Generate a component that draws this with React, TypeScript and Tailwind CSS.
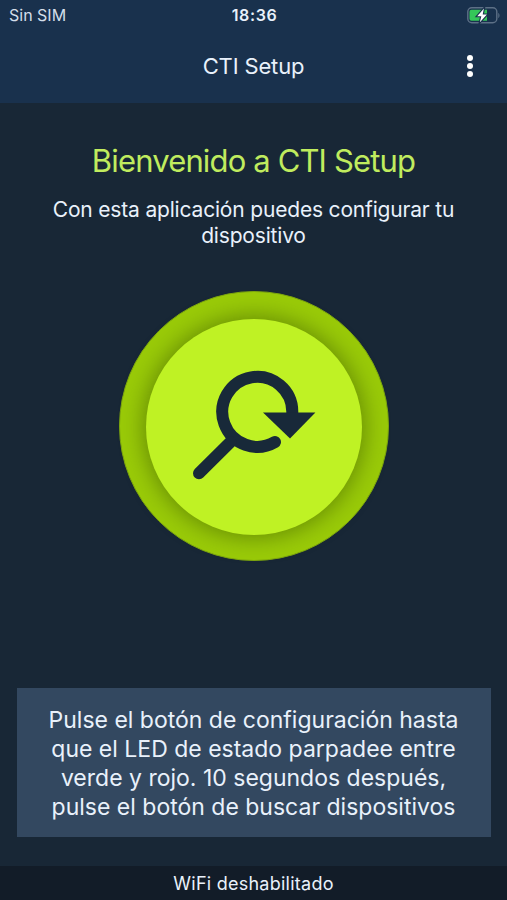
import React from "react";

const introLines = ["Con esta aplicación puedes configurar tu", "dispositivo"];

const helpLines = [
  "Pulse el botón de configuración hasta",
  "que el LED de estado parpadee entre",
  "verde y rojo. 10 segundos después,",
  "pulse el botón de buscar dispositivos",
];

function BatteryIcon() {
  return (
    <svg width="33" height="17" viewBox="0 0 33 17" fill="none">
      <rect x="0.8" y="0.8" width="29" height="15" rx="4" stroke="#5d7086" strokeWidth="1.4" />
      <path d="M31.3 6v5c1.6-.5 1.6-4.5 0-5Z" fill="#5d7086" />
      <path d="M4.5 2.8h15.5v11h-15.5a2 2 0 0 1-2-2v-7a2 2 0 0 1 2-2Z" fill="#35c759" />
      <path
        d="M16.9 1.6 10.2 9.2h4.1l-1.4 6 7-7.7h-4.2Z"
        fill="#fff"
        stroke="#19314d"
        strokeWidth="2.2"
        paintOrder="stroke"
      />
    </svg>
  );
}

function SearchDevicesIcon() {
  return (
    <svg width="216" height="216" viewBox="0 0 216 216" fill="none">
      <g stroke="#182939" strokeWidth="12" strokeLinecap="round">
        <path d="M146.3 95V93A35 35 0 1 0 129 123" />
        <path d="M84.5 123 53 154.3" />
      </g>
      <path d="M117 93.5h52.4L144 119.5Z" fill="#182939" />
    </svg>
  );
}

export default function App() {
  return (
    <div className="flex h-[900px] w-[507px] flex-col overflow-hidden bg-[#182736] font-['Inter','Liberation_Sans',sans-serif] text-[#e9f1fb]">
      <header className="h-[103px] shrink-0 bg-[#19314d]">
        {/* Status bar */}
        <div className="grid h-[30px] grid-cols-[1fr_60px_1fr] items-center pr-[7px] pl-[9px]">
          <span className="text-[16px] text-[#d3deea]">Sin SIM</span>
          <span className="text-center text-[16px] font-semibold tracking-[0.6px]">18:36</span>
          <span className="flex justify-end">
            <BatteryIcon />
          </span>
        </div>

        {/* Toolbar */}
        <div className="grid h-[72px] grid-cols-[75px_1fr_75px] items-center">
          <span />
          <h1 className="text-center text-[22px] tracking-[-0.15px]">CTI Setup</h1>
          <button className="flex flex-col items-center gap-[2px]">
            <span className="size-[6px] rounded-full bg-white" />
            <span className="size-[6px] rounded-full bg-white" />
            <span className="size-[6px] rounded-full bg-white" />
          </button>
        </div>
      </header>

      <main className="flex grow flex-col items-center">
        <h2 className="mt-[38px] text-[31px] leading-[40px] tracking-[-0.85px] whitespace-nowrap text-[#c0ec5e]">
          Bienvenido a CTI Setup
        </h2>
        <p className="mt-4 text-center text-[21px] leading-[26px] tracking-[-0.18px]">
          {introLines.map((line) => (
            <span key={line} className="block whitespace-nowrap">
              {line}
            </span>
          ))}
        </p>

        <button className="mt-[42px] flex size-[270px] items-center justify-center rounded-full border border-[#7da60e] bg-[#9acb08] pt-[2px]">
          <span className="flex size-[216px] items-center justify-center rounded-full bg-[#bff224] shadow-[0_0_22px_3px_rgba(60,90,0,0.55)]">
            <SearchDevicesIcon />
          </span>
        </button>

        <div className="mt-auto mb-[29px] w-[474px] bg-[#334860] pt-[18px] pb-[15px] text-center text-[23px] leading-[29px]">
          {helpLines.map((line) => (
            <span key={line} className="block whitespace-nowrap">
              {line}
            </span>
          ))}
        </div>
      </main>

      <footer className="flex h-[34px] shrink-0 items-center justify-center bg-[#121c28] pt-px text-[18px] tracking-[0.25px]">
        WiFi deshabilitado
      </footer>
    </div>
  );
}
